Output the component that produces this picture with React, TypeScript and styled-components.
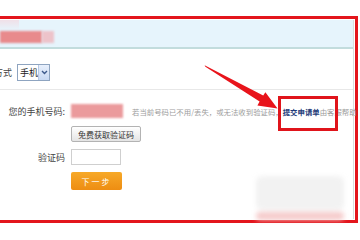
import styled, { createGlobalStyle } from 'styled-components';

const GlobalStyle = createGlobalStyle`
  html, body {
    margin: 0;
    padding: 0;
    background: #ffffff;
    overflow: hidden;
  }
  body {
    font-family: "Noto Sans CJK SC", "Noto Sans", sans-serif;
  }
`;

const Page = styled.div`
  position: relative;
  width: 360px;
  height: 240px;
  padding-top: 16px;
  box-sizing: border-box;
  overflow: hidden;
`;

const Frame = styled.div`
  margin-left: -40px;
  width: 398px;
  height: 207px;
  box-sizing: border-box;
  border: 3px solid #e3151c;
  padding: 1px;
`;

const Panel = styled.div`
  height: 100%;
  box-sizing: border-box;
  border-right: 1px solid #dcdcdc;
`;

const Header = styled.div`
  display: flex;
  height: 29px;
  background: linear-gradient(to bottom, #f0e0e8 0, #e6f4fc 10px);
  background-size: 55px 100%;
  background-repeat: no-repeat;
  background-color: #e6f4fc;
  border-bottom: 2px solid #c2dcdd;
  padding-top: 11px;
  padding-left: 36px;
  box-sizing: border-box;
`;

const Blur = styled.div<{ $w: number; $h: number; $color: string }>`
  width: ${(p) => p.$w}px;
  height: ${(p) => p.$h}px;
  background: ${(p) => p.$color};
  filter: blur(1.2px);
  flex-shrink: 0;
`;

const MethodRow = styled.div`
  display: flex;
  align-items: center;
  gap: 5px;
  margin-top: 15px;
  height: 17px;
`;

const Label = styled.span<{ $w: number }>`
  width: ${(p) => p.$w}px;
  text-align: right;
  font-size: 9px;
  color: #444;
  white-space: nowrap;
  flex-shrink: 0;
`;

const Select = styled.div`
  display: flex;
  align-items: stretch;
  width: 33px;
  height: 17px;
  box-sizing: border-box;
  border: 1px solid #8ea4c0;
  background: #fff;
`;

const SelectText = styled.span`
  flex: 1;
  font-size: 9px;
  line-height: 15px;
  padding-left: 2px;
  color: #222;
`;

const SelectArrow = styled.span`
  width: 10px;
  display: flex;
  align-items: center;
  justify-content: center;
  background: linear-gradient(#e8f0fc, #c8d9f3);
  border-left: 1px solid #b7c8e4;
`;

const Divider = styled.div`
  margin-top: 8px;
  border-top: 1px solid #e8e8e8;
`;

const Form = styled.div`
  display: grid;
  grid-template-columns: 101px 1fr;
  grid-template-rows: 16px 16px 16px 18px;
  column-gap: 6px;
  row-gap: 7px;
  margin-top: 13px;
  align-items: center;
`;

const Value = styled.div`
  display: flex;
  align-items: center;
  white-space: nowrap;
`;

const Hint = styled.span`
  margin-left: 9px;
  font-size: 7.4px;
  color: #9c9c9c;
`;

const HintLink = styled.span`
  color: #1d3a78;
  font-weight: bold;
`;

const GrayButton = styled.button`
  width: 70px;
  height: 16px;
  padding: 0;
  border: 1px solid #b3b3b3;
  border-radius: 2px;
  background: linear-gradient(#ffffff, #e4e4e4);
  font-family: inherit;
  font-size: 8px;
  color: #333;
`;

const Input = styled.div`
  width: 50px;
  height: 16px;
  box-sizing: border-box;
  border: 1px solid #cfcfcf;
  background: #fff;
`;

const NextButton = styled.button`
  width: 51px;
  height: 18px;
  padding: 0;
  border: none;
  border-radius: 2px;
  background: linear-gradient(#f7a928, #ee8d12);
  font-family: inherit;
  font-size: 8px;
  letter-spacing: 2px;
  color: #fff;
`;

const Highlight = styled.div`
  position: absolute;
  left: 278px;
  top: 96px;
  width: 60px;
  height: 35px;
  box-sizing: border-box;
  border: 3px solid #e0141b;
`;

const Arrow = styled.svg`
  position: absolute;
  left: 0;
  top: 0;
`;

const Watermark = styled.div`
  position: absolute;
  left: 250px;
  top: 166px;
  width: 100px;
  height: 54px;
  display: flex;
  flex-direction: column;
  justify-content: flex-end;
  gap: 2px;
  filter: blur(2.5px);
`;

const Mark = styled.div<{ $color: string; $h: number }>`
  height: ${(p) => p.$h}px;
  margin: 0 6px;
  background: ${(p) => p.$color};
  border-radius: 6px;
`;

export default function App() {
  return (
    <>
      <GlobalStyle />
      <Page>
        <Frame>
          <Panel>
            <Header>
              <Blur $w={42} $h={12} $color="#e88a8c" />
              <Blur $w={12} $h={12} $color="#edc3ca" />
            </Header>
            <MethodRow>
              <Label $w={48}>验证方式</Label>
              <Select>
                <SelectText>手机</SelectText>
                <SelectArrow>
                  <svg width="7" height="5" viewBox="0 0 7 5">
                    <path d="M1 1 L3.5 3.5 L6 1" stroke="#3d5a8c" strokeWidth="1.4" fill="none" />
                  </svg>
                </SelectArrow>
              </Select>
            </MethodRow>
            <Divider />
            <Form>
              <Label $w={101}>您的手机号码:</Label>
              <Value>
                <Blur $w={52} $h={14} $color="#eb9a9c" />
                <Hint>
                  若当前号码已不用/丢失，或无法收到验证码，<HintLink>提交申请单</HintLink>由客服帮助
                </Hint>
              </Value>
              <span />
              <Value>
                <GrayButton>免费获取验证码</GrayButton>
              </Value>
              <Label $w={101}>验证码</Label>
              <Value>
                <Input />
              </Value>
              <span />
              <Value>
                <NextButton>下一步</NextButton>
              </Value>
            </Form>
          </Panel>
        </Frame>
        <Watermark>
          <Mark $color="#f2f2f2" $h={34} />
          <Mark $color="#f5caca" $h={8} />
        </Watermark>
        <Highlight />
        <Arrow width="360" height="240" viewBox="0 0 360 240">
          <polygon
            points="204.6,65.2 205.4,66.8 259.6,101.6 257.4,105.6 277.5,108.5 265.4,92.2 263.2,95.6"
            fill="#e8141b"
          />
        </Arrow>
      </Page>
    </>
  );
}
